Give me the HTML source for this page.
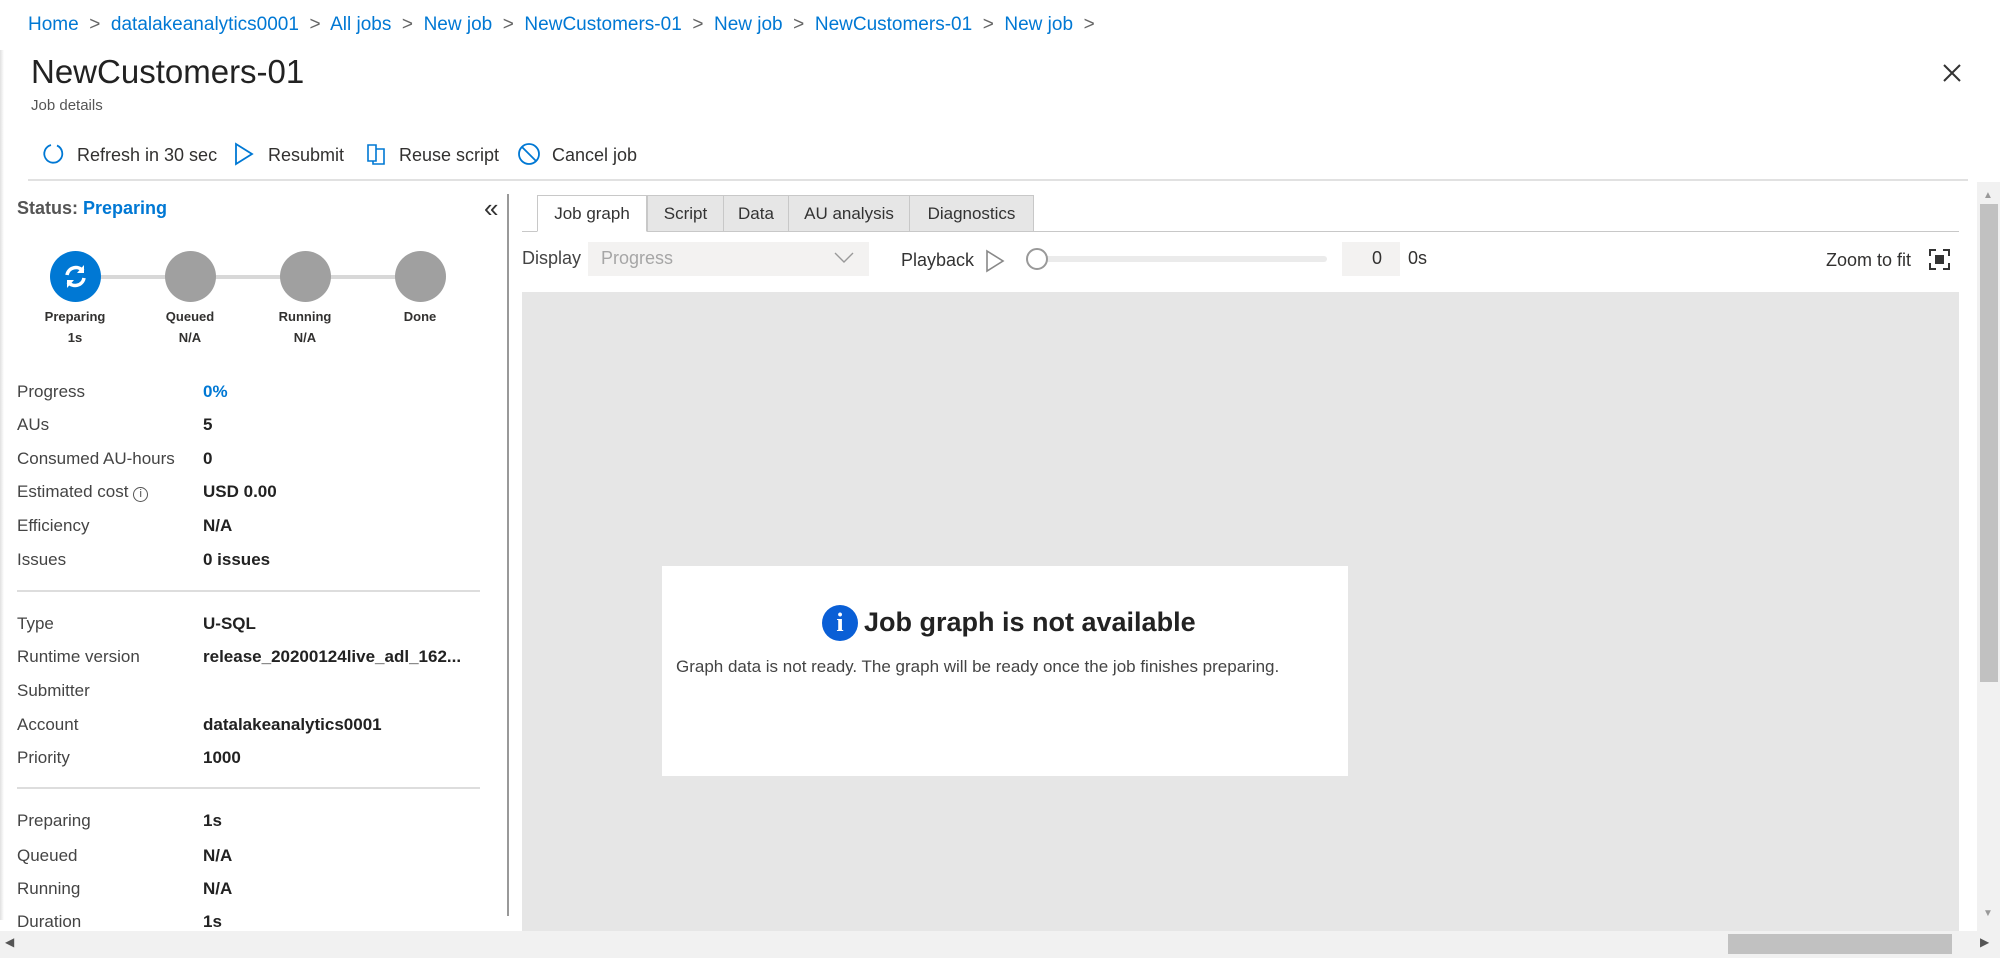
<!DOCTYPE html>
<html><head><meta charset="utf-8"><style>
*{margin:0;padding:0;box-sizing:border-box}
body{width:2000px;height:958px;overflow:hidden;background:#fff;font-family:"Liberation Sans",sans-serif;color:#323130;position:relative}
.a{position:absolute;white-space:nowrap}
.bc{top:14px;font-size:19px;color:#0078d4}
.sep{color:#666}
.lbl{left:17px;font-size:17px;color:#444}
.val{left:203px;font-size:17px;font-weight:bold;color:#222}
.circ{position:absolute;width:51px;height:51px;border-radius:50%;background:#a0a0a0;top:251px}
.st{position:absolute;font-size:13px;font-weight:bold;text-align:center;width:100px;line-height:21px;top:306px}
.tab{position:absolute;top:195px;height:37px;border:1px solid #c8c8c8;background:#e6e6e6;font-size:17px;line-height:35px;text-align:center;color:#333}
</style></head><body>
<div class="a bc" style="left:28px">Home <span class="sep">&nbsp;&gt;&nbsp;</span> datalakeanalytics0001 <span class="sep">&nbsp;&gt;&nbsp;</span> All jobs <span class="sep">&nbsp;&gt;&nbsp;</span> New job <span class="sep">&nbsp;&gt;&nbsp;</span> NewCustomers-01 <span class="sep">&nbsp;&gt;&nbsp;</span> New job <span class="sep">&nbsp;&gt;&nbsp;</span> NewCustomers-01 <span class="sep">&nbsp;&gt;&nbsp;</span> New job <span class="sep">&nbsp;&gt;</span></div>
<div class="a" style="left:0;top:50px;width:4px;height:870px;background:linear-gradient(90deg,#e0e0e0,#fff)"></div>
<div class="a" style="left:31px;top:53px;font-size:33px;color:#222">NewCustomers-01</div>
<div class="a" style="left:31px;top:97px;font-size:15px;color:#555">Job details</div>
<svg class="a" style="left:1942px;top:63px" width="20" height="20"><path d="M2 2L18 18M18 2L2 18" stroke="#333" stroke-width="2"/></svg>
<svg class="a" style="left:42px;top:142px" width="24" height="24"><path d="M9 3A9 9 0 1 0 15 3.5" fill="none" stroke="#0078d4" stroke-width="1.8"/></svg>
<div class="a" style="left:77px;top:145px;font-size:18px">Refresh in 30 sec</div>
<svg class="a" style="left:233px;top:142px" width="22" height="24"><path d="M3 2L19 12L3 22Z" fill="none" stroke="#0078d4" stroke-width="1.8"/></svg>
<div class="a" style="left:268px;top:145px;font-size:18px">Resubmit</div>
<svg class="a" style="left:366px;top:142px" width="22" height="24"><path d="M2 3H10V19H2ZM10 7H18V22H7V19" fill="none" stroke="#0078d4" stroke-width="1.6"/></svg>
<div class="a" style="left:399px;top:145px;font-size:18px">Reuse script</div>
<svg class="a" style="left:517px;top:142px" width="24" height="24"><circle cx="12" cy="12" r="10" fill="none" stroke="#0078d4" stroke-width="1.8"/><path d="M5 5L19 19" stroke="#0078d4" stroke-width="1.8"/></svg>
<div class="a" style="left:552px;top:145px;font-size:18px">Cancel job</div>
<div class="a" style="left:28px;top:179px;width:1940px;height:2px;background:#e1e1e1"></div>

<div class="a" style="left:17px;top:198px;font-size:18px;font-weight:bold;color:#555">Status: <span style="color:#0078d4">Preparing</span></div>
<div class="a" style="left:484px;top:193px;font-size:26px;color:#333">«</div>
<div class="a" style="left:80px;top:275px;width:350px;height:4px;background:#d8d8d8"></div>
<div class="circ" style="left:50px;background:#0078d4"><svg width="51" height="51"><path d="M17 24A9 9 0 0 1 33 20M34 27A9 9 0 0 1 18 31" fill="none" stroke="#fff" stroke-width="3.5"/><path d="M34 14V22H27Z M17 37V29H24Z" fill="#fff"/></svg></div>
<div class="circ" style="left:165px"></div>
<div class="circ" style="left:280px"></div>
<div class="circ" style="left:395px"></div>
<div class="st" style="left:25px">Preparing<br>1s</div>
<div class="st" style="left:140px">Queued<br>N/A</div>
<div class="st" style="left:255px">Running<br>N/A</div>
<div class="st" style="left:370px">Done</div>

<div class="a lbl" style="top:382px">Progress</div><div class="a val" style="top:382px;color:#0078d4">0%</div>
<div class="a lbl" style="top:415px">AUs</div><div class="a val" style="top:415px">5</div>
<div class="a lbl" style="top:449px">Consumed AU-hours</div><div class="a val" style="top:449px">0</div>
<div class="a lbl" style="top:482px">Estimated cost <span style="display:inline-block;width:15px;height:15px;border:1px solid #555;border-radius:50%;font-size:11px;text-align:center;line-height:13px">i</span></div><div class="a val" style="top:482px">USD 0.00</div>
<div class="a lbl" style="top:516px">Efficiency</div><div class="a val" style="top:516px">N/A</div>
<div class="a lbl" style="top:550px">Issues</div><div class="a val" style="top:550px">0 issues</div>
<div class="a" style="left:17px;top:590px;width:463px;height:2px;background:#ddd"></div>
<div class="a lbl" style="top:614px">Type</div><div class="a val" style="top:614px">U-SQL</div>
<div class="a lbl" style="top:647px">Runtime version</div><div class="a val" style="top:647px">release_20200124live_adl_162...</div>
<div class="a lbl" style="top:681px">Submitter</div>
<div class="a lbl" style="top:715px">Account</div><div class="a val" style="top:715px">datalakeanalytics0001</div>
<div class="a lbl" style="top:748px">Priority</div><div class="a val" style="top:748px">1000</div>
<div class="a" style="left:17px;top:787px;width:463px;height:2px;background:#ddd"></div>
<div class="a lbl" style="top:811px">Preparing</div><div class="a val" style="top:811px">1s</div>
<div class="a lbl" style="top:846px">Queued</div><div class="a val" style="top:846px">N/A</div>
<div class="a lbl" style="top:879px">Running</div><div class="a val" style="top:879px">N/A</div>
<div class="a lbl" style="top:912px">Duration</div><div class="a val" style="top:912px">1s</div>
<div class="a" style="left:507px;top:194px;width:2px;height:722px;background:#999"></div>

<div class="a" style="left:522px;top:231px;width:1437px;height:1px;background:#c8c8c8"></div>
<div class="tab" style="left:537px;width:110px;background:#fff;border-bottom:1px solid #fff">Job graph</div>
<div class="tab" style="left:647px;width:77px">Script</div>
<div class="tab" style="left:723px;width:66px">Data</div>
<div class="tab" style="left:788px;width:122px">AU analysis</div>
<div class="tab" style="left:909px;width:125px">Diagnostics</div>

<div class="a" style="left:522px;top:248px;font-size:18px;color:#444">Display</div>
<div class="a" style="left:588px;top:242px;width:281px;height:34px;background:#f3f2f1"></div>
<div class="a" style="left:601px;top:248px;font-size:18px;color:#a6a6a6">Progress</div>
<svg class="a" style="left:834px;top:251px" width="20" height="14"><path d="M1 2L10 11L19 2" fill="none" stroke="#999" stroke-width="1.4"/></svg>
<div class="a" style="left:901px;top:250px;font-size:18px;color:#333">Playback</div>
<svg class="a" style="left:984px;top:249px" width="22" height="24"><path d="M3 2L19 12L3 22Z" fill="none" stroke="#888" stroke-width="1.6"/></svg>
<div class="a" style="left:1036px;top:256px;width:291px;height:6px;background:#ebebeb;border-radius:3px"></div>
<div class="a" style="left:1026px;top:248px;width:22px;height:22px;border-radius:50%;border:2px solid #999;background:#fff"></div>
<div class="a" style="left:1342px;top:242px;width:58px;height:34px;background:#f3f2f1;font-size:18px;text-align:right;padding:6px 18px 0 0">0</div>
<div class="a" style="left:1408px;top:248px;font-size:18px">0s</div>
<div class="a" style="left:1826px;top:250px;font-size:18px">Zoom to fit</div>
<svg class="a" style="left:1929px;top:249px" width="21" height="21"><path d="M1 7V1H7M14 1H20V7M20 14V20H14M7 20H1V14" fill="none" stroke="#333" stroke-width="2"/><rect x="6" y="6" width="9" height="9" fill="#333"/></svg>

<div class="a" style="left:522px;top:292px;width:1437px;height:639px;background:#e6e6e6"></div>
<div class="a" style="left:662px;top:566px;width:686px;height:210px;background:#fff"></div>
<div class="a" style="left:822px;top:605px;width:36px;height:36px;border-radius:50%;background:#0a5fd6;color:#fff;font-weight:bold;font-size:26px;text-align:center;line-height:36px;font-family:'Liberation Serif',serif">i</div>
<div class="a" style="left:864px;top:607px;font-size:27px;font-weight:bold;color:#222">Job graph is not available</div>
<div class="a" style="left:676px;top:657px;font-size:17px;color:#444">Graph data is not ready. The graph will be ready once the job finishes preparing.</div>

<div class="a" style="left:1977px;top:182px;width:23px;height:749px;background:#f1f1f1"></div>
<div class="a" style="left:1983px;top:190px;font-size:10px;color:#999">▲</div>
<div class="a" style="left:1983px;top:908px;font-size:10px;color:#999">▼</div>
<div class="a" style="left:1980px;top:204px;width:18px;height:478px;background:#c1c1c1"></div>
<div class="a" style="left:0;top:931px;width:2000px;height:27px;background:#f1f1f1"></div>
<div class="a" style="left:5px;top:935px;font-size:12px;color:#555">◀</div>
<div class="a" style="left:1980px;top:935px;font-size:12px;color:#555">▶</div>
<div class="a" style="left:1728px;top:934px;width:224px;height:20px;background:#c1c1c1"></div>
</body></html>
